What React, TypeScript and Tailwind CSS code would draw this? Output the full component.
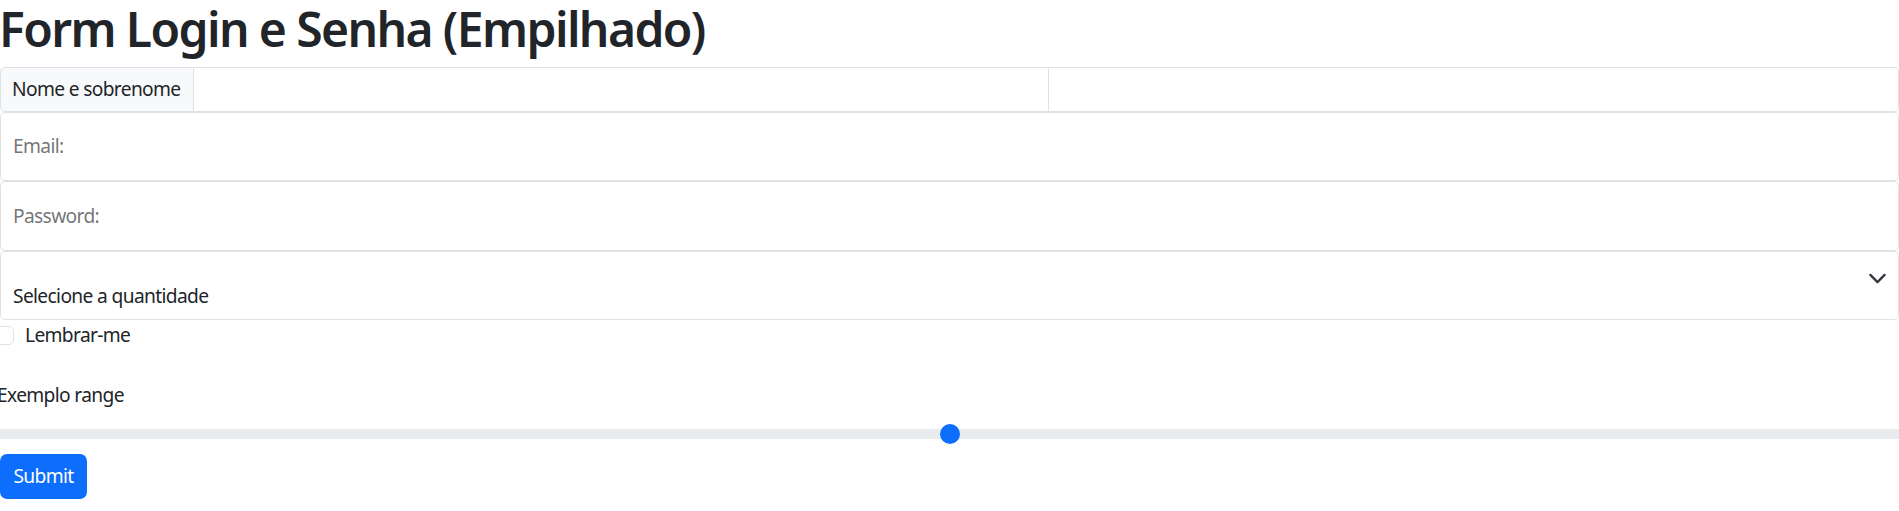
import React from "react";

export default function App() {
  return (
    <div className="w-[1899px] h-[511px] overflow-hidden bg-white text-[#212529] font-['Noto_Sans',sans-serif] text-[19.2px] leading-[28.8px] tracking-[-0.65px]">
      <h1 className="text-[48px] leading-[57.6px] font-semibold tracking-[-1.6px] mb-[9.4px] -ml-[1px] whitespace-nowrap">
        Form Login e Senha (Empilhado)
      </h1>

      <div className="flex h-[45px]">
        <div className="w-[194px] shrink-0 flex items-center px-[11px] bg-[#f8f9fa] border border-[#dee2e6] rounded-l-[5px] whitespace-nowrap">
          Nome e sobrenome
        </div>
        <div className="w-[855px] shrink-0 border-y border-r border-[#dee2e6]" />
        <div className="flex-1 border-y border-r border-[#dee2e6] rounded-r-[5px]" />
      </div>

      <div className="h-[69px] flex items-center px-[12px] border border-[#dee2e6] rounded-[5px] text-[rgba(33,37,41,0.65)]">
        Email:
      </div>
      <div className="h-[70px] flex items-center px-[12px] border border-[#dee2e6] rounded-[5px] text-[rgba(33,37,41,0.65)]">
        Password:
      </div>
      <div className="h-[69px] flex items-start justify-between pl-[12px] pr-[11px] pt-[30px] border border-[#dee2e6] rounded-[5px]">
        <span>Selecione a quantidade</span>
        <svg width="19" height="19" viewBox="0 0 16 16" className="-mt-[13px]">
          <path d="m2 5 6 6 6-6" fill="none" stroke="#343a40" strokeWidth="2" strokeLinecap="round" strokeLinejoin="round" />
        </svg>
      </div>

      <div className="flex items-start h-[29px] mt-[1px] gap-[11px]">
        <div className="w-[19px] h-[19px] -ml-[5px] mt-[5px] border border-[#dee2e6] rounded-[5px] bg-white shrink-0" />
        <span>Lembrar-me</span>
      </div>

      <div className="mt-[31px] -ml-[3px] mb-[9.6px] whitespace-nowrap">Exemplo range</div>

      <div className="h-[29px] flex items-center">
        <div className="relative w-full h-[10px] bg-[#e9ecef]">
          <div className="absolute left-[940px] top-1/2 -translate-y-1/2 w-[20px] h-[20px] rounded-full bg-[#0d6efd]" />
        </div>
      </div>

      <div className="mt-[6px] w-[87px] h-[45px] flex items-center justify-center bg-[#0d6efd] text-white rounded-[7px]">
        Submit
      </div>
    </div>
  );
}
